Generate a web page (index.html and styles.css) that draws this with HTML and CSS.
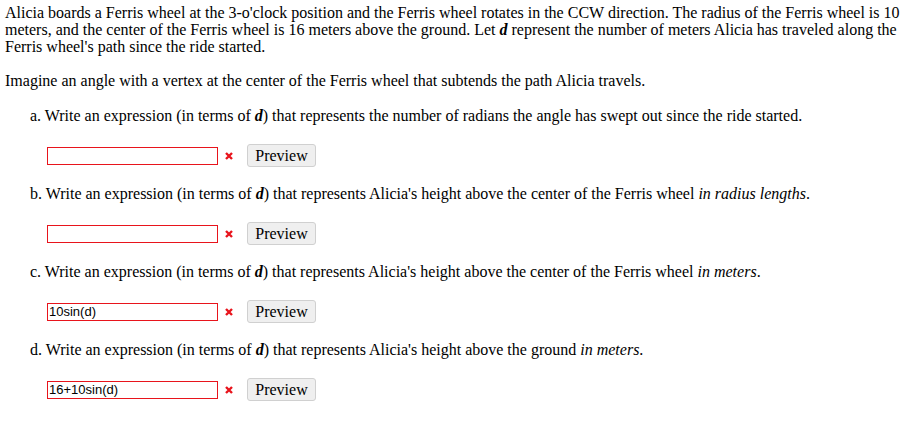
FILE: index.html
```html
<!DOCTYPE html>
<html>

<head>
    <title>Ferris wheel</title>
    <link rel="stylesheet" href="styles.css">
</head>

<body>
    <div id="problem">
        <p class="intro">Alicia boards a Ferris wheel at the 3-o'clock position and the Ferris wheel rotates in the CCW direction. The radius of the Ferris wheel is 10 meters, and the center of the Ferris wheel is 16 meters above the ground. Let <i class="var">d</i> represent the number of meters Alicia has traveled along the Ferris wheel's path since the ride started.</p>
        <p class="intro last">Imagine an angle with a vertex at the center of the Ferris wheel that subtends the path Alicia travels.</p>

        <div class="part">
            <p class="question">a. Write an expression (in terms of <i class="var">d</i>) that represents the number of radians the angle has swept out since the ride started.</p>
            <div class="answer">
                <input type="text" class="ans" value="">
                <span class="wrong"><svg width="8" height="8" viewBox="0 0 8 8"><path d="M1 1 L7 7 M7 1 L1 7" stroke="#e8141c" stroke-width="2.4"/></svg></span>
                <button class="preview">Preview</button>
            </div>
        </div>

        <div class="part">
            <p class="question">b. Write an expression (in terms of <i class="var">d</i>) that represents Alicia's height above the center of the Ferris wheel <i>in radius lengths</i>.</p>
            <div class="answer">
                <input type="text" class="ans" value="">
                <span class="wrong"><svg width="8" height="8" viewBox="0 0 8 8"><path d="M1 1 L7 7 M7 1 L1 7" stroke="#e8141c" stroke-width="2.4"/></svg></span>
                <button class="preview">Preview</button>
            </div>
        </div>

        <div class="part">
            <p class="question">c. Write an expression (in terms of <i class="var">d</i>) that represents Alicia's height above the center of the Ferris wheel <i>in meters</i>.</p>
            <div class="answer">
                <input type="text" class="ans" value="10sin(d)">
                <span class="wrong"><svg width="8" height="8" viewBox="0 0 8 8"><path d="M1 1 L7 7 M7 1 L1 7" stroke="#e8141c" stroke-width="2.4"/></svg></span>
                <button class="preview">Preview</button>
            </div>
        </div>

        <div class="part">
            <p class="question">d. Write an expression (in terms of <i class="var">d</i>) that represents Alicia's height above the ground <i>in meters</i>.</p>
            <div class="answer">
                <input type="text" class="ans" value="16+10sin(d)">
                <span class="wrong"><svg width="8" height="8" viewBox="0 0 8 8"><path d="M1 1 L7 7 M7 1 L1 7" stroke="#e8141c" stroke-width="2.4"/></svg></span>
                <button class="preview">Preview</button>
            </div>
        </div>
    </div>
</body>

</html>
```

FILE: styles.css
```css
body {
    margin: 0;
    font-family: "Liberation Serif", "Times New Roman", serif;
    font-size: 16px;
    line-height: 17.25px;
    color: #000;
    background: #fff;
}

#problem {
    padding: 3.6px 5px 0 5px;
}

.intro {
    margin: 0 0 17px 0;
}

.intro.last {
    margin-bottom: 17.4px;
}

.var {
    font-weight: bold;
}

.part {
    margin-left: 25px;
}

.question {
    margin: 0;
    padding-bottom: 20px;
}

.answer {
    display: flex;
    align-items: center;
    margin-left: 17px;
    height: 23px;
    margin-bottom: 17.75px;
}

.ans {
    width: 171px;
    height: 18px;
    box-sizing: border-box;
    border: 1px solid #e8141c;
    padding: 0 1px;
    margin: 0;
    font-family: "Liberation Sans", Arial, sans-serif;
    font-size: 13px;
    outline: none;
}

.wrong {
    display: flex;
    margin-left: 7px;
    width: 8px;
}

.preview {
    margin-left: 14px;
    height: 23px;
    width: 69px;
    padding: 0;
    border: 1px solid #d0d0d0;
    border-radius: 3px;
    background-color: #efefef;
    font-family: "Liberation Serif", "Times New Roman", serif;
    font-size: 16px;
    color: #000;
}
```
